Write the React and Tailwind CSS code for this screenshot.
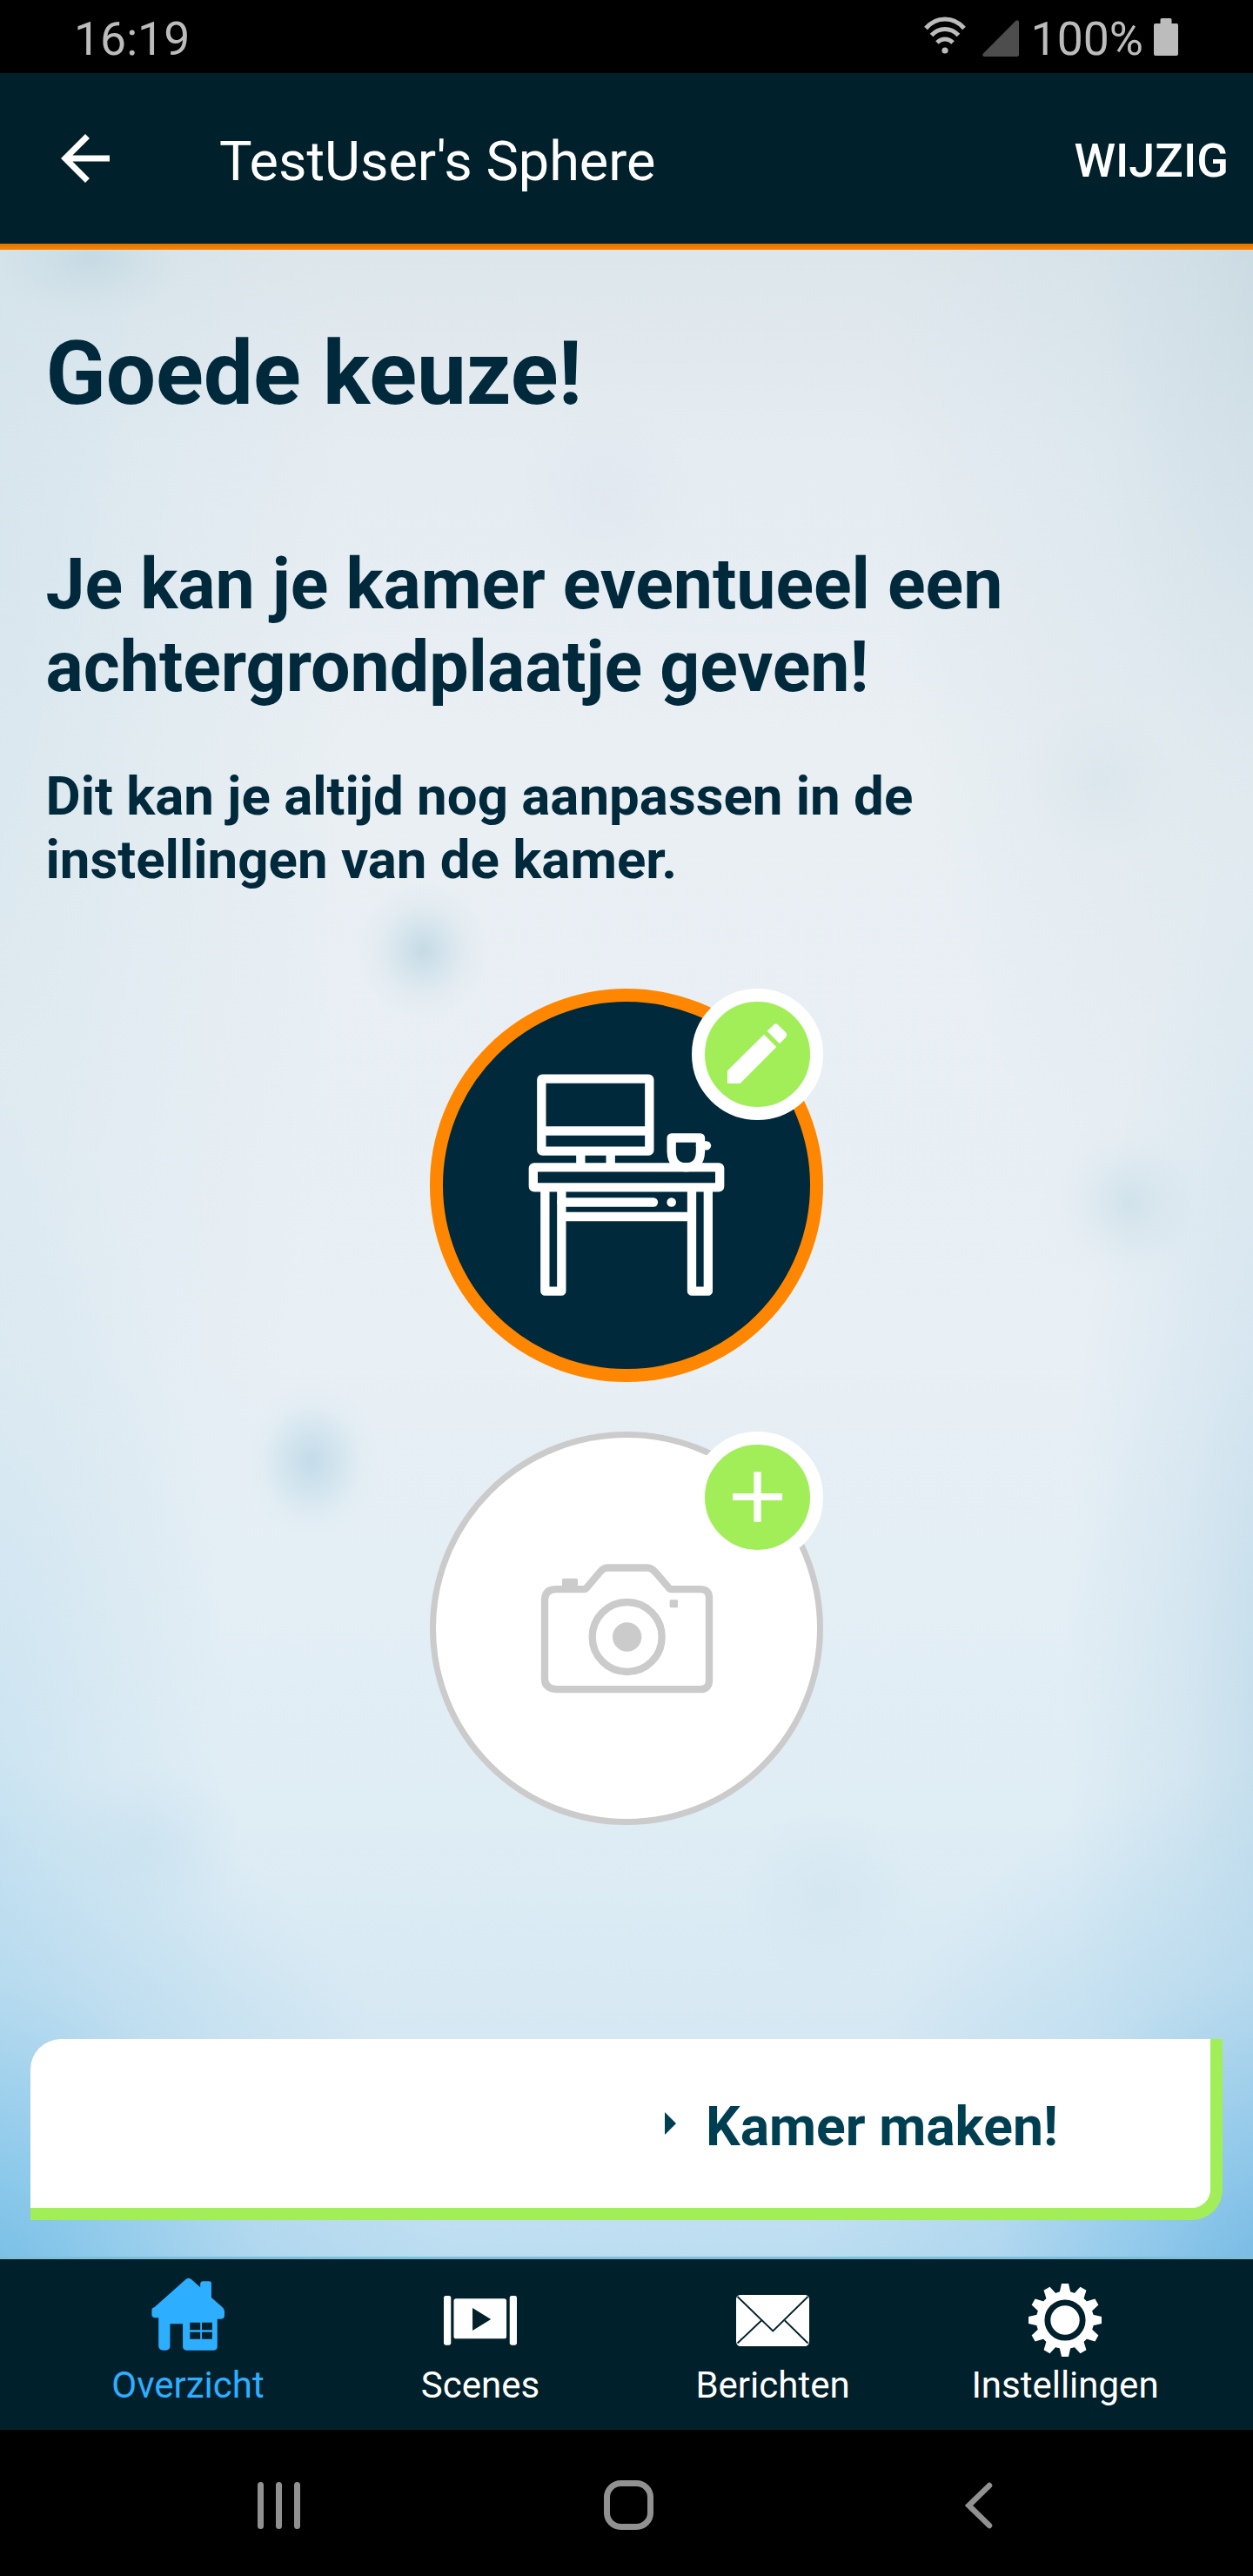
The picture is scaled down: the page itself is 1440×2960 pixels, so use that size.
import React from 'react';

function StatusBar() {
  return (
    <div className="flex h-[84px] shrink-0 items-center bg-black pt-[6px] pl-[85px] pr-[86px] text-[53.5px] leading-none text-[#bcbcbc]">
      <span>16:19</span>
      <div className="ml-auto flex h-full items-center">
        <svg className="mt-[-12px] h-[48px] w-[48px]" viewBox="0 0 48 48" fill="none" stroke="#bcbcbc" strokeWidth="5">
          <path d="M2 17.500C14 3.500 34 3.500 46 17.500" />
          <path d="M8.500 25.500C17 16 31 16 39.500 25.500" />
          <path d="M15 34C20 28.500 28 28.500 33 34" />
          <circle cx="24" cy="43" r="3.600" fill="#bcbcbc" stroke="none" />
        </svg>
        <svg className="ml-[19px] -mt-[2px] h-[42px] w-[42px]" viewBox="0 0 42 42">
          <path d="M38.500 .8Q42 -1 42 3V39.500Q42 42 39.500 42H2.500Q-1 42 1 38.500Z" fill="#4d4d4d" />
        </svg>
        <span className="ml-[14px]">100%</span>
        <svg className="ml-[12px] -mt-[5px] h-[43px] w-[28px]" viewBox="0 0 28 43" fill="#bcbcbc">
          <path d="M9 0H19Q20.500 0 20.500 1.500V6H26.500Q28 6 28 8V41Q28 43 26 43H2Q0 43 0 41V8Q0 6 1.500 6H7.500V1.500Q7.500 0 9 0Z" />
        </svg>
      </div>
    </div>
  );
}

function Header() {
  return (
    <>
      <header className="flex h-[196px] shrink-0 items-center bg-[#00212b] pl-[56px] pr-[28px] text-white">
        <svg className="size-[84px]" viewBox="0 0 24 24" fill="currentColor">
          <path d="M20 11H7.830l5.590-5.590L12 4l-8 8 8 8 1.410-1.410L7.830 13H20v-2z" />
        </svg>
        <h1 className="ml-[112px] pt-[7px] text-[63px] leading-[74px]">TestUser's Sphere</h1>
        <button className="ml-auto pt-[5px] text-[54px] leading-[64px] font-medium">WIJZIG</button>
      </header>
      <div className="h-[7px] shrink-0 bg-linear-to-b from-[#e27600] to-[#fb8400]" />
    </>
  );
}

function DeskIcon() {
  return (
    <svg className="size-[422px]" viewBox="87 93 1266 1266" fill="none" stroke="#fff" strokeWidth="31" strokeLinejoin="round">
      <rect x="427" y="359" width="372" height="249" rx="3" />
      <path d="M427 538.500H799M562 608V664M665 608V664" />
      <rect x="398.500" y="664" width="643" height="69" rx="3" />
      <path d="M875 562.500H975V610Q973 664 925 664Q877 664 875 610Z" />
      <path d="M975 589H996" strokeLinecap="round" />
      <path d="M439 733V1091H496V733M945 733V1091H1001.500V733M496 834H945" />
      <path d="M496 784.500H813" strokeLinecap="round" />
      <circle cx="875" cy="784.500" r="16" fill="#fff" stroke="none" />
    </svg>
  );
}

function CameraIcon() {
  return (
    <svg className="size-[438px]" viewBox="63 66 1314 1314" fill="none" stroke="#cbcbcb" strokeWidth="25" strokeLinejoin="round">
      <path d="M478 588.500H572Q579 588.500 583 583L626 532Q640 514.500 654 514.500H793Q806 514.500 822 532L863 580Q869 588.500 874 588.500H974Q1005 588.500 1005 618V902Q1005 933.500 974 933.500H478Q438 930 438 898V622Q441 588.500 478 588.500Z" />
      <circle cx="722" cy="753" r="120" />
      <circle cx="722" cy="753" r="50" fill="#cbcbcb" stroke="none" />
      <rect x="498" y="551" width="54" height="40" rx="5" fill="#cbcbcb" stroke="none" />
      <rect x="869" y="625" width="28" height="27" rx="4" fill="#cbcbcb" stroke="none" />
    </svg>
  );
}

function Badge({ children }) {
  return (
    <div className="absolute top-0 right-0 size-[151px] rounded-full border-[15px] border-white bg-[#a1ee59]">
      {children}
    </div>
  );
}

function ImageChoices() {
  return (
    <div className="mt-[110px] flex flex-col items-center gap-[57px]">
      <div className="relative size-[452px]">
        <div className="flex size-full items-center justify-center rounded-full border-[15px] border-[#ff8600] bg-[#00293c]">
          <DeskIcon />
        </div>
        <Badge>
          <svg className="size-full" viewBox="990 93 363 363" fill="#fff">
            <path d="M1068 331L1194 206L1237 249L1112 375H1068ZM1205 194L1227 173Q1235 164 1243 173L1269 199Q1276 207 1269 216L1248 238Z" />
          </svg>
        </Badge>
      </div>
      <div className="relative size-[452px]">
        <div className="flex size-full items-center justify-center rounded-full border-[7px] border-[#cbcbcb] bg-white">
          <CameraIcon />
        </div>
        <Badge>
          <svg className="size-full" viewBox="990 90 363 363" fill="#fff">
            <path d="M1159 184H1184V258H1257V282H1184V356H1159V282H1086V258H1159Z" />
          </svg>
        </Badge>
      </div>
    </div>
  );
}

function HouseIcon() {
  return (
    <svg className="size-[84px]" viewBox="378 112 184 252" preserveAspectRatio="none" fill="currentColor" fillRule="evenodd">
      <path d="M379 222Q380 216 386 214L463 120Q471 109 479 119L501 146V132Q502 125 508 125H522Q529 125 529 132V181L558 216Q562 222 562 230V245Q561 255 554 255H544V350Q544 363 535 363H466Q457 362 457 350V272H425V348Q425 363 411 363Q396 363 396 348V251H388Q379 250 379 240ZM475 267V293H501V267ZM505 267V293H531V267ZM475 300V324H501V300ZM505 300V324H531V300Z" />
    </svg>
  );
}

function SceneIcon() {
  return (
    <svg className="size-[84px]" viewBox="1111 135 183 252" preserveAspectRatio="none" fill="currentColor" fillRule="evenodd">
      <rect x="1111" y="177" width="18" height="170" rx="5" ry="7" />
      <rect x="1276" y="177" width="18" height="170" rx="5" ry="7" />
      <path d="M1142 187H1262Q1268 187 1268 195V317Q1268 325 1262 325H1142Q1136 325 1136 317V195Q1136 187 1142 187ZM1183 219V297L1229 258Z" />
    </svg>
  );
}

function MailIcon() {
  return (
    <svg className="size-[84px]" viewBox="0 0 84 84" fill="currentColor">
      <path d="M4 13H80Q84 14 84 18V66Q84 71 80 72H4Q0 71 0 66V18Q0 14 4 13Z" />
      <path d="M1.500 15L42.300 54.500L82.500 15M1.500 68.500L29 42.500M82.500 68.500L56 42.500" fill="none" stroke="#00212b" strokeWidth="1.800" />
    </svg>
  );
}

function GearIcon() {
  const teeth = Array.from({ length: 12 }, (_, i) => i * 30);
  return (
    <svg className="size-[84px]" viewBox="-42 -42 84 84" fill="currentColor">
      {teeth.map((a) => (
        <path key={a} transform={`rotate(${a})`} d="M-4 -42H4L6.500 -31H-6.500Z" />
      ))}
      <circle r="28.300" fill="none" stroke="currentColor" strokeWidth="9.500" />
      <circle r="16.700" />
    </svg>
  );
}

const tabs = [
  { label: 'Overzicht', Icon: HouseIcon, active: true },
  { label: 'Scenes', Icon: SceneIcon },
  { label: 'Berichten', Icon: MailIcon },
  { label: 'Instellingen', Icon: GearIcon },
];

function TabBar() {
  return (
    <nav className="grid h-[199px] shrink-0 grid-cols-4 border-t-[3px] border-[#7fc0d8] bg-[#00212b] px-[48px]">
      {tabs.map(({ label, Icon, active }) => (
        <div key={label} className={`flex flex-col items-center ${active ? 'pt-[21px] text-[#2eaeff]' : 'pt-[28px] text-white'}`}>
          <Icon />
          <span className={`text-[42px] leading-[50px] ${active ? 'mt-[15px]' : 'mt-[8px]'}`}>{label}</span>
        </div>
      ))}
    </nav>
  );
}

function SystemNav() {
  return (
    <div className="flex h-[168px] shrink-0 items-center bg-black pt-[5px] pl-[296px]">
      <svg className="h-[54px] w-[49px]" viewBox="0 0 49 54" fill="#919191">
        <rect width="7" height="54" rx="3.500" />
        <rect x="21" width="7" height="54" rx="3.500" />
        <rect x="42" width="7" height="54" rx="3.500" />
      </svg>
      <svg className="ml-[349px] h-[57px] w-[57px]" viewBox="0 0 57 57" fill="none" stroke="#919191" strokeWidth="7">
        <rect x="3.500" y="3.500" width="50" height="50" rx="16" />
      </svg>
      <svg className="ml-[358px] h-[54px] w-[32px]" viewBox="0 0 32 54" fill="none" stroke="#919191" strokeWidth="6.500" strokeLinecap="round">
        <path d="M28 4L4.500 27L28 50" strokeLinejoin="miter" />
      </svg>
    </div>
  );
}

export default function App() {
  return (
    <div className="flex h-[2960px] w-[1440px] flex-col overflow-hidden bg-black font-['Roboto',sans-serif]">
      <StatusBar />
      <Header />
      <main className="relative isolate flex h-[2306px] shrink-0 flex-col overflow-hidden bg-[linear-gradient(to_bottom,#dde6eb_0%,#e5ecf2_10%,#e9eff3_25%,#e8eff5_55%,#dfedf5_78%,#d6e8f3_89%,#bcddf1_100%)] pt-[83px] text-[#00293c]">
        <div className="absolute inset-0 -z-10 bg-[radial-gradient(560px_640px_at_-3%_103%,#6cbae4,#7ec3e9bb_30%,#98cdeb55_62%,#9acfec00_100%),radial-gradient(560px_640px_at_103%_103%,#6cb4e2,#7ec0e8bb_30%,#98cdeb55_62%,#9acfec00_100%),radial-gradient(300px_900px_at_-2%_80%,#b0d8ee77,#bcdcee33_55%,#bcdcee00),radial-gradient(260px_1000px_at_103%_72%,#aacfe499,#b4d4e644_50%,#bcd8e800),radial-gradient(440px_1700px_at_-3%_15%,#c5dce877,#c8dfe833_55%,#c8dce500),radial-gradient(480px_1300px_at_103%_0%,#bdd2dc99,#c8dbe444_50%,#c8dce500)]" />
        <div className="absolute inset-0 -z-10 bg-[radial-gradient(74px_78px_at_486px_805px,#c3d9e4ee,#c8dde799_35%,#d0e1ea33_72%,#d5e5ec00),radial-gradient(78px_90px_at_358px_1392px,#bdd9e8dd,#c4dde999_35%,#cfe3ed33_72%,#d5e5ec00),radial-gradient(100px_100px_at_1298px_1095px,#c8dde8aa,#cfe1ea66_40%,#d5e5ec1a_75%,#d5e5ec00),radial-gradient(110px_70px_at_105px_10px,#b8d2dd88,#b8d2dd33_50%,#b4d0dc00),radial-gradient(110px_110px_at_695px_285px,#dde5ee88,#dde5ee00),radial-gradient(90px_90px_at_1265px_610px,#d3e1e877,#d3e1e800),radial-gradient(100px_100px_at_950px_1890px,#cfe3ef88,#cfe3ef00),radial-gradient(110px_90px_at_170px_1830px,#c3deee77,#c3deee00)]" />
        <h2 className="pl-[52.5px] text-[101.5px] leading-[119px] font-bold">Goede keuze!</h2>
        <p className="mt-[136px] pl-[52.5px] text-[80.7px] leading-[94.6px] font-bold">
          Je kan je kamer eventueel een
          <br />
          achtergrondplaatje geven!
        </p>
        <p className="mt-[64px] pl-[52.5px] pt-px text-[61.8px] leading-[73.2px] font-bold">
          Dit kan je altijd nog aanpassen in de
          <br />
          instellingen van de kamer.
        </p>
        <ImageChoices />
        <button className="mx-[35px] mt-auto mb-[42px] flex h-[208px] items-center rounded-tl-[35px] rounded-br-[35px] border-r-[14px] border-b-[14px] border-[#a1ee59] bg-white pl-[729px] text-[#003e52]">
          <svg className="h-[26px] w-[13px]" viewBox="0 0 13 26" fill="currentColor">
            <path d="M0 0L13 13L0 26Z" />
          </svg>
          <span className="ml-[34px] pt-[7px] text-[62.4px] leading-[74px] font-bold">Kamer maken!</span>
        </button>
      </main>
      <TabBar />
      <SystemNav />
    </div>
  );
}
